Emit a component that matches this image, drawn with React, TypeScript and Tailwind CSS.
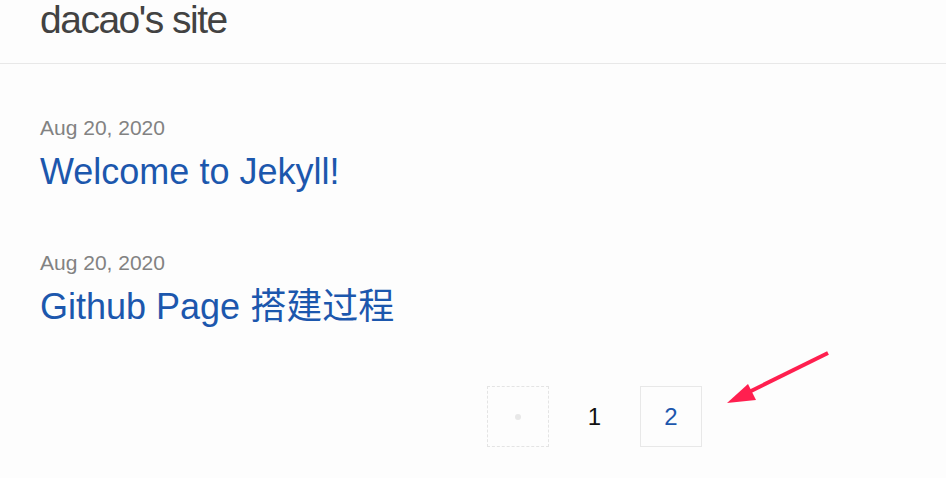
const posts = [
  { date: 'Aug 20, 2020', title: 'Welcome to Jekyll!' },
  { date: 'Aug 20, 2020', title: 'Github Page 搭建过程' },
];

export default function App() {
  return (
    <div
      className="relative min-h-screen bg-[#fdfdfd] text-[#111111]"
      style={{ fontFamily: '"Liberation Sans", "Noto Sans CJK SC", Arial, sans-serif' }}
    >
      <header className="h-[64px] border-b border-[#e8e8e8] px-[40px]">
        <a className="block text-[39px] leading-[39px] tracking-[-1.5px] font-light text-[#424242]">
          dacao's site
        </a>
      </header>

      <main className="px-[40px] pt-[49px]">
        <ul>
          {posts.map((post, i) => (
            <li key={i} className="mb-[47px] last:mb-0">
              <div className="text-[21px] leading-[30px] text-[#828282]">{post.date}</div>
              <h3 className="text-[36px] leading-[58px] text-[#1c57ad]">{post.title}</h3>
            </li>
          ))}
        </ul>

        <div className="mt-[50px] ml-[447px] flex items-center">
          <div className="w-[62px] h-[61px] border border-dashed border-[#e4e4e4] flex items-center justify-center">
            <span className="block w-[6px] h-[6px] rounded-full bg-[#e8e8e8]" />
          </div>
          <div className="w-[91px] h-[61px] flex items-center justify-center text-[24px] leading-[61px] text-[#111111]">
            1
          </div>
          <div className="w-[62px] h-[61px] border border-[#e8e8e8] flex items-center justify-center text-[24px] leading-[61px] text-[#1c57ad]">
            2
          </div>
        </div>
      </main>

      <svg
        className="absolute left-0 top-0 pointer-events-none"
        width="946"
        height="478"
        viewBox="0 0 946 478"
      >
        <line x1="828" y1="353" x2="745" y2="394" stroke="#ff1f4f" strokeWidth="4" strokeLinecap="butt" />
        <polygon points="727,403 748,384 756,400" fill="#ff1f4f" />
      </svg>
    </div>
  );
}
